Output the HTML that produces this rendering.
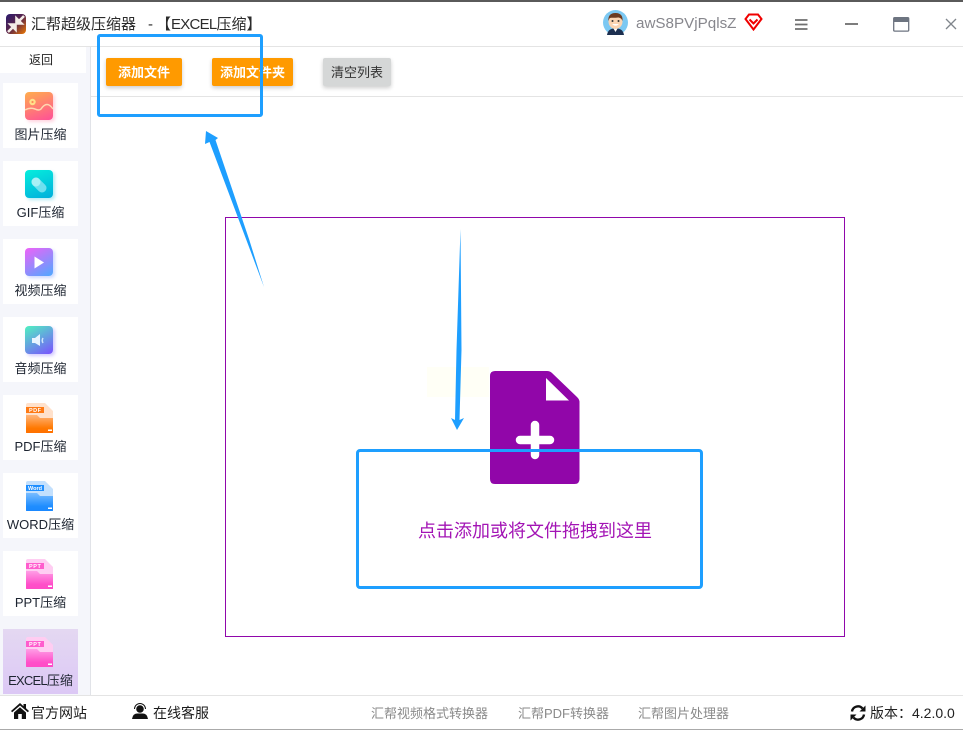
<!DOCTYPE html>
<html lang="zh">
<head>
<meta charset="utf-8">
<style>
*{box-sizing:border-box;margin:0;padding:0}
html,body{width:963px;height:730px;overflow:hidden;background:#fff}
body{position:relative;font-family:"Liberation Sans","Noto Sans CJK SC",sans-serif;color:#222}
.a{position:absolute;white-space:nowrap}
.item{position:absolute;left:3px;width:75px;height:65px;background:#fff;text-align:center}
.item .t{position:absolute;left:-5px;right:-5px;top:43px;font-size:13px;line-height:18px;color:#1d2430}
.ic{position:absolute;left:22px;top:9px;width:28px;height:28px;border-radius:4px}
.btn{position:absolute;top:58px;height:28px;border-radius:2px;background:#ff9a00;color:#fff;font-weight:700;font-size:13px;line-height:29px;text-align:center;box-shadow:0 2px 4px rgba(0,0,0,.2)}
.folder{position:absolute;left:22px;top:8px;width:29px;height:30px}
.foot{position:absolute;top:704px;font-size:13px;line-height:19px;color:#8a8a8a}
.foot.k{font-size:14px;color:#1c1c1c}
</style>
</head>
<body>
<div class="a" style="left:0;top:0;width:963px;height:2px;background:#5a5a5a"></div>
<div class="a" style="left:0;top:46px;width:963px;height:1px;background:#e4e4e4"></div>

<svg class="a" style="left:6px;top:14px" width="20" height="20" viewBox="0 0 20 20">
<defs><linearGradient id="lg" x1="0" y1="0" x2="1" y2="1"><stop offset="0" stop-color="#2b1a6e"/><stop offset=".5" stop-color="#5a2448"/><stop offset="1" stop-color="#f07a00"/></linearGradient></defs>
<rect width="20" height="20" rx="4" fill="url(#lg)"/>
<path d="M2 18L8 12M4.500 10.500L9.500 10.500L9.500 15.500Z M18 2L12 8M10.500 4.500L10.500 9.500L15.500 9.500Z" stroke="#f3ebe6" stroke-width="2.600" fill="#f3ebe6"/>
</svg>
<div class="a" style="left:31px;top:14px;font-size:15px;line-height:22px;color:#2b2b2b">汇帮超级压缩器</div>
<div class="a" style="left:148px;top:14px;font-size:15px;line-height:22px;color:#2b2b2b">-<span style="margin-left:3px">【</span><span style="letter-spacing:-.75px">EXCEL</span>压缩】</div>

<svg class="a" style="left:603px;top:10px" width="25" height="25" viewBox="0 0 25 25">
<circle cx="12.500" cy="12.500" r="12.500" fill="#7cc8f2"/>
<path d="M4 25C5 19 9 18.500 12.500 18.500S20 19 21 25Q12.500 26 4 25Z" fill="#1c2f50"/>
<path d="M10.500 18.500L12.500 22L14.500 18.500Z" fill="#fff"/>
<ellipse cx="12.500" cy="11.500" rx="7" ry="7.500" fill="#fbd4b2"/>
<path d="M5.500 11C4.800 4.500 9 3 12.500 3S20.200 4.500 19.500 11C18.500 8.500 17 7.500 15 7.500C12 8 8 7.500 7 8C6.200 8.500 5.800 10 5.500 11Z" fill="#6b3a20"/>
<circle cx="9.500" cy="11" r="1" fill="#333"/><circle cx="15.500" cy="11" r="1" fill="#333"/>
<path d="M9 14Q12.500 17.500 16 14Z" fill="#fff"/>
</svg>
<div class="a" style="left:636px;top:14px;font-size:15.200px;line-height:20px;color:#87878d">awS8PVjPqlsZ</div>
<svg class="a" style="left:744px;top:13px" width="19" height="18" viewBox="0 0 19 18">
<path d="M5 1.500H14L17.500 6L9.500 16.500L1.500 6Z" fill="none" stroke="#f00000" stroke-width="2"/>
<path d="M5.500 6.500L9.500 10.500L13.500 6.500" fill="none" stroke="#f00000" stroke-width="2"/>
</svg>
<svg class="a" style="left:795px;top:19px" width="13" height="12" viewBox="0 0 13 12"><path d="M0 1H12.500M0 5.500H12.500M0 10H12.500" stroke="#6f6f6f" stroke-width="1.800"/></svg>
<div class="a" style="left:845px;top:23px;width:13px;height:2px;background:#7d7d7d"></div>
<svg class="a" style="left:893px;top:17px" width="17" height="15" viewBox="0 0 17 15"><rect x=".7" y=".7" width="15" height="13.400" rx="1" fill="none" stroke="#6d7480" stroke-width="1.300"/><rect x="1" y="1" width="15" height="4" fill="#6d7480"/></svg>
<svg class="a" style="left:945px;top:18px" width="12" height="12" viewBox="0 0 12 12"><path d="M1 1L11 11M11 1L1 11" stroke="#80858c" stroke-width="1.300"/></svg>

<!-- sidebar -->
<div class="a" style="left:0;top:47px;width:90px;height:648px;background:#f5f6fb"></div>
<div class="a" style="left:90px;top:47px;width:1px;height:648px;background:#e1e3e8"></div>
<div class="a" style="left:0;top:47px;width:86px;height:26px;background:#fff;text-align:center;font-size:12px;line-height:27px;color:#222"><span style="position:relative;left:-2px">返回</span></div>

<div class="item" style="top:83px">
  <div class="ic" style="background:linear-gradient(160deg,#ffae4d,#ff4f98);box-shadow:2px 2px 3px rgba(255,110,150,.3)"></div>
  <svg class="a" style="left:22px;top:9px" width="28" height="28" viewBox="0 0 28 28"><circle cx="7.500" cy="10" r="3.200" fill="#ffe08a"/><circle cx="7.500" cy="10" r="1.100" fill="#ff8a5a"/><path d="M0 18Q5 15 10 17Q14 19 16 17Q20 11 24 13Q26 14 28 17" fill="none" stroke="#ffd9b0" stroke-width="1.500"/></svg>
  <div class="t">图片压缩</div>
</div>
<div class="item" style="top:161px">
  <div class="ic" style="background:linear-gradient(160deg,#06eedd,#00aedb);box-shadow:2px 2px 3px rgba(0,190,220,.3)"></div>
  <svg class="a" style="left:22px;top:9px" width="28" height="28" viewBox="0 0 28 28"><path d="M11 12L17 18" stroke="#6fe0ef" stroke-width="9" stroke-linecap="round"/><circle cx="11" cy="12" r="4.500" fill="#a9f0f5"/></svg>
  <div class="t">GIF压缩</div>
</div>
<div class="item" style="top:239px">
  <div class="ic" style="background:linear-gradient(150deg,#ef62f8,#4ea9ff);box-shadow:2px 2px 3px rgba(90,130,255,.3)"></div>
  <svg class="a" style="left:22px;top:9px" width="28" height="28" viewBox="0 0 28 28"><path d="M9.500 8.500L19 14.500L9.500 20.500Z" fill="#fff"/></svg>
  <div class="t">视频压缩</div>
</div>
<div class="item" style="top:317px">
  <div class="ic" style="background:linear-gradient(150deg,#4ff2c0,#7a50ff);box-shadow:2px 2px 3px rgba(110,80,255,.3)"></div>
  <svg class="a" style="left:22px;top:9px" width="28" height="28" viewBox="0 0 28 28"><path d="M7 12H10L15 8V20L10 17H7Z" fill="#e8f4ff"/><path d="M18 12Q16.500 14.500 18 17" stroke="#cfe4ff" stroke-width="1.500" fill="none"/></svg>
  <div class="t">音频压缩</div>
</div>
<div class="item" style="top:395px">
  <svg class="folder" viewBox="0 0 29 30"><defs><linearGradient id="o" x1="0" y1="0" x2="0" y2="1"><stop offset="0" stop-color="#ffb57a"/><stop offset=".7" stop-color="#ff7800"/><stop offset="1" stop-color="#ff6f00"/></linearGradient></defs>
  <path d="M3 0H20L28 8V26H1V2Q1 0 3 0Z" fill="#ffe1cb"/><path d="M1 12H12L15 15H28V29Q28 31 26 31H3Q1 31 1 29Z" fill="url(#o)"/><rect x="1" y="4" width="18" height="6" fill="#ff7a14"/><text x="4" y="9.200" font-family="Liberation Sans" font-size="5.500" font-weight="700" fill="#fff" letter-spacing=".5">PDF</text><rect x="23" y="26.500" width="4" height="1.500" fill="#fff"/></svg>
  <div class="t">PDF压缩</div>
</div>
<div class="item" style="top:473px">
  <svg class="folder" viewBox="0 0 29 30"><defs><linearGradient id="b" x1="0" y1="0" x2="0" y2="1"><stop offset="0" stop-color="#78bcff"/><stop offset=".7" stop-color="#1f8dff"/><stop offset="1" stop-color="#1a88ff"/></linearGradient></defs>
  <path d="M3 0H20L28 8V26H1V2Q1 0 3 0Z" fill="#c3e0fd"/><path d="M1 12H12L15 15H28V29Q28 31 26 31H3Q1 31 1 29Z" fill="url(#b)"/><rect x="1" y="4" width="18" height="6" fill="#1f8fff"/><text x="3" y="9.200" font-family="Liberation Sans" font-size="5.500" font-weight="700" fill="#fff">Word</text><rect x="23" y="26.500" width="4" height="1.500" fill="#fff"/></svg>
  <div class="t">WORD压缩</div>
</div>
<div class="item" style="top:551px">
  <svg class="folder" viewBox="0 0 29 30"><defs><linearGradient id="p" x1="0" y1="0" x2="0" y2="1"><stop offset="0" stop-color="#ff9ee6"/><stop offset=".7" stop-color="#ff4fc9"/><stop offset="1" stop-color="#ff4ac6"/></linearGradient></defs>
  <path d="M3 0H20L28 8V26H1V2Q1 0 3 0Z" fill="#ffcdf2"/><path d="M1 12H12L15 15H28V29Q28 31 26 31H3Q1 31 1 29Z" fill="url(#p)"/><rect x="1" y="4" width="18" height="6" fill="#ff5ccd"/><text x="4" y="9.200" font-family="Liberation Sans" font-size="5.500" font-weight="700" fill="#fff" letter-spacing=".6">PPT</text><rect x="23" y="26.500" width="4" height="1.500" fill="#fff"/></svg>
  <div class="t">PPT压缩</div>
</div>
<div class="item" style="top:629px;background:linear-gradient(180deg,#e4d8f2,#dcc8f5)">
  <svg class="folder" viewBox="0 0 29 30">
  <path d="M3 0H20L28 8V26H1V2Q1 0 3 0Z" fill="#ffcdf2"/><path d="M1 12H12L15 15H28V29Q28 31 26 31H3Q1 31 1 29Z" fill="url(#p)"/><rect x="1" y="4" width="18" height="6" fill="#ff5ccd"/><text x="4" y="9.200" font-family="Liberation Sans" font-size="5.500" font-weight="700" fill="#fff" letter-spacing=".6">PPT</text><rect x="23" y="26.500" width="4" height="1.500" fill="#fff"/></svg>
  <div class="t"><span style="letter-spacing:-.8px">EXCEL</span>压缩</div>
</div>

<!-- toolbar -->
<div class="a" style="left:91px;top:96px;width:872px;height:1px;background:#e4e4e4"></div>
<div class="btn" style="left:106px;width:76px">添加文件</div>
<div class="btn" style="left:212px;width:81px">添加文件夹</div>
<div class="btn" style="left:323px;width:68px;background:#d5d7d7;color:#333;font-weight:400">清空列表</div>

<!-- drop area -->
<div class="a" style="left:225px;top:217px;width:620px;height:420px;border:1px solid #9007ab"></div>
<div class="a" style="left:427px;top:367px;width:62px;height:30px;background:#fffff6"></div>
<svg class="a" style="left:490px;top:370px" width="90" height="115" viewBox="0 0 90 115">
<path d="M5 1H57Q60 1 62 3L87 27Q89.500 29.500 89.500 32V109Q89.500 114 84.500 114H5Q0 114 0 109V6Q0 1 5 1Z" fill="#9106a9"/>
<path d="M56 10.500L79 33H56Z" fill="#fff" transform="translate(0 -2.500)"/>
<path d="M45 55V85M30 70H60" stroke="#fff" stroke-width="8.500" stroke-linecap="round"/>
</svg>
<div class="a" style="left:418px;top:519px;font-size:18px;line-height:24px;color:#a314b5">点击添加或将文件拖拽到这里</div>

<!-- annotations -->
<div class="a" style="left:97px;top:34px;width:166px;height:83px;border:3px solid #1e9fff;border-radius:3px"></div>
<div class="a" style="left:356px;top:449px;width:347px;height:140px;border:3px solid #1e9fff;border-radius:4px"></div>
<svg class="a" style="left:0;top:0;pointer-events:none" width="963" height="730">
<path d="M264 287L249 239L215.500 140L218 138L206 131L205 144L209.500 142L246 239Z" fill="#1e9fff"/>
<path d="M460.500 229L461.500 350L459.500 420L464 418L457 430L451 418L455 420L456.500 350Z" fill="#1e9fff"/>
</svg>

<!-- footer -->
<div class="a" style="left:0;top:695px;width:963px;height:1px;background:#e4e4e4"></div>
<div class="a" style="left:0;top:729px;width:963px;height:1px;background:#aaa"></div>
<svg class="a" style="left:11px;top:703px" width="18" height="16" viewBox="0 0 18 16"><path d="M9 0L0 8L1.200 9.300L9 2.500L16.800 9.300L18 8L15 5.300V1H12.500V3.200Z M3 9.500V16H7.200V11H10.800V16H15V9.500L9 4.300Z" fill="#111"/></svg>
<div class="foot k" style="left:31px">官方网站</div>
<svg class="a" style="left:132px;top:703px" width="16" height="16" viewBox="0 0 16 16"><circle cx="8" cy="6" r="3.800" fill="#111"/><path d="M2.500 6A5.500 5.500 0 0 1 13.500 6" fill="none" stroke="#111" stroke-width="1"/><path d="M0 16Q1 10.500 5 10.500H11Q15 10.500 16 16Z" fill="#111"/></svg>
<div class="foot k" style="left:153px">在线客服</div>
<div class="foot" style="left:371px">汇帮视频格式转换器</div>
<div class="foot" style="left:518px">汇帮PDF转换器</div>
<div class="foot" style="left:638px">汇帮图片处理器</div>
<svg class="a" style="left:850px;top:705px" width="16" height="16" viewBox="0 0 16 16"><path d="M2 6.500A6 6 0 0 1 12.500 3.500" fill="none" stroke="#111" stroke-width="2.400"/><path d="M15.500 0.500V6.500H9.500Z" fill="#111"/><path d="M14 9.500A6 6 0 0 1 3.500 12.500" fill="none" stroke="#111" stroke-width="2.400"/><path d="M0.500 15.500V9.500H6.500Z" fill="#111"/></svg>
<div class="foot k" style="left:870px;color:#222">版本：4.2.0.0</div>
</body>
</html>
